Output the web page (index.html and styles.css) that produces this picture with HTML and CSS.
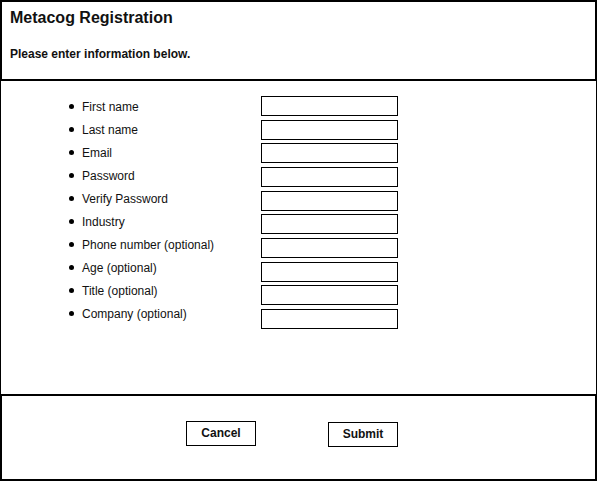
FILE: index.html
```html
<!DOCTYPE html>
<html lang="en">
<head>
    <meta charset="UTF-8">
    <title>Metacog Registration</title>
    <link rel="stylesheet" href="styles.css">
</head>
<body>
    <div class="frame">
        <!-- En-tête -->
        <div class="header">
            <h1>Metacog Registration</h1>
            <p>Please enter information below.</p>
        </div>

        <!-- Formulaire -->
        <form class="content" id="registerForm">
            <ul class="labels">
                <li>First name</li>
                <li>Last name</li>
                <li>Email</li>
                <li>Password</li>
                <li>Verify Password</li>
                <li>Industry</li>
                <li>Phone number (optional)</li>
                <li>Age (optional)</li>
                <li>Title (optional)</li>
                <li>Company (optional)</li>
            </ul>
            <div class="fields">
                <input type="text" name="firstName">
                <input type="text" name="lastName">
                <input type="email" name="email">
                <input type="password" name="password">
                <input type="password" name="verifyPassword">
                <input type="text" name="industry">
                <input type="tel" name="phone">
                <input type="text" name="age">
                <input type="text" name="title">
                <input type="text" name="company">
            </div>
        </form>

        <!-- Boutons -->
        <div class="footer">
            <button type="button" class="btn">Cancel</button>
            <button type="submit" form="registerForm" class="btn btn-submit">Submit</button>
        </div>
    </div>
</body>
</html>
```

FILE: styles.css
```css
body {
    margin: 0;
    background: #fff;
    font-family: 'Liberation Sans', Arial, sans-serif;
    color: #111;
}

.frame {
    width: 597px;
}

/* En-tête */
.header {
    box-sizing: border-box;
    height: 81px;
    border: 2px solid #000;
    padding: 6px 0 0 8px;
}
.header h1 {
    margin: 0;
    font-size: 16px;
    line-height: 19px;
    font-weight: bold;
}
.header p {
    margin: 20px 0 0 0;
    font-size: 12px;
    line-height: 14px;
    font-weight: bold;
}

/* Zone du formulaire */
.content {
    box-sizing: border-box;
    height: 313px;
    margin: 0;
    border-left: 1px solid #000;
    border-right: 1px solid #000;
    display: flex;
}
.labels {
    list-style: none;
    width: 192px;
    margin: 0 0 0 68px;
    padding: 14px 0 0 0;
}
.labels li {
    display: flex;
    align-items: center;
    height: 23px;
    font-size: 12px;
}
.labels li::before {
    content: "";
    width: 5px;
    height: 5px;
    border-radius: 50%;
    background: #000;
    margin-right: 8px;
}
.fields {
    display: flex;
    flex-direction: column;
    gap: 3.67px;
    padding-top: 15px;
}
.fields input {
    box-sizing: border-box;
    width: 137px;
    height: 20px;
    margin: 0;
    padding: 0 3px;
    border: 1px solid #000;
    background: #fff;
}

/* Pied avec les boutons */
.footer {
    box-sizing: border-box;
    height: 87px;
    border: 2px solid #000;
    padding: 25px 0 0 184px;
    display: flex;
    align-items: flex-start;
    gap: 72px;
}
.btn {
    box-sizing: border-box;
    width: 70px;
    height: 25px;
    padding: 0 0 2px 0;
    border: 1px solid #000;
    background: #fff;
    color: #111;
    font-family: 'Liberation Sans', Arial, sans-serif;
    font-size: 12px;
    font-weight: bold;
}
.btn-submit {
    margin-top: 1px;
}
```
